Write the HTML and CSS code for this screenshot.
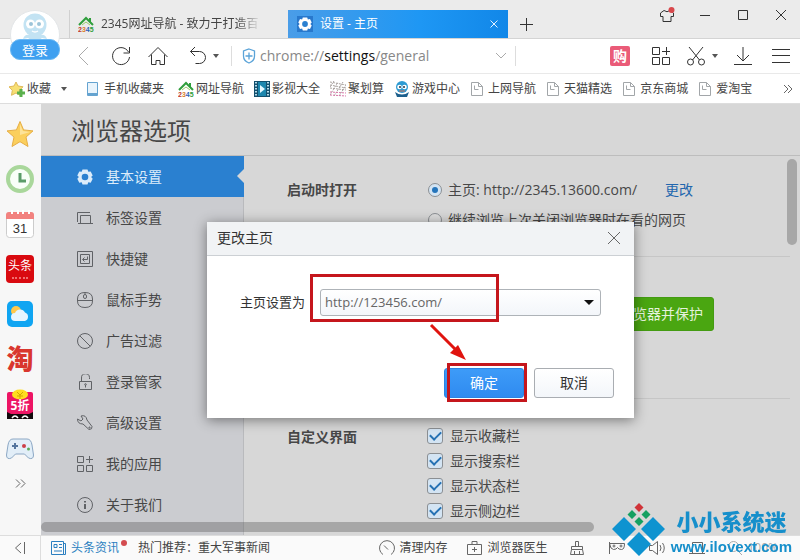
FILE: index.html
```html
<!DOCTYPE html>
<html lang="zh-CN">
<head>
<meta charset="utf-8">
<title>设置 - 主页</title>
<link rel="stylesheet" href="styles.css">
</head>
<body>
<svg class="defs" aria-hidden="true">
  <symbol id="i-page" viewBox="0 0 16 16"><path d="M1.5 1.5h7l4 4v9h-11zM8.500 1.500v4h4M4.500 4.500v4h4" fill="none" stroke="#a2a6a9"/></symbol>
  <symbol id="i-gear" viewBox="0 0 16 16"><path d="M5.500 0.500h5l.8 2.300 2.400-.4 2 4-1.600 1.600 1.600 1.700-2 4-2.400-.5-.8 2.300h-5l-.8-2.300-2.400.5-2-4L1.900 8 .3 6.400l2-4 2.400.4z"/><circle cx="8" cy="8" r="3.300" class="gear-hole"/></symbol>
</svg>

<header class="chrome">
  <div class="tabs">
    <div class="tab">
      <svg class="i16" viewBox="0 0 16 16"><path d="M1 9L8 2l7 7M12 2v4" fill="none" stroke="#2f9e3c" stroke-width="2"/><path d="M4 9l4-3 4 3" fill="none" stroke="#9acb6a"/><text class="mini" x="0" y="16"><tspan fill="#c0392b">2</tspan><tspan fill="#d9822b">3</tspan><tspan fill="#2c62b8">4</tspan><tspan fill="#2f9e3c">5</tspan></text></svg>
      <span class="tab-title fade">2345网址导航 - 致力于打造百</span>
    </div>
    <div class="tab active">
      <svg class="i16 tab-gear"><use href="#i-gear"/></svg>
      <span class="tab-title">设置 - 主页</span>
      <button class="plain" aria-label="关闭标签"><svg width="8" height="8" viewBox="0 0 8 8"><path d="M.5.5l7 7M7.500.500l-7 7" stroke="#e4f2ff" fill="none"/></svg></button>
    </div>
    <button class="plain new-tab" aria-label="新标签"><svg class="line" width="13" height="13"><path d="M6.500 0v13M0 6.500h13"/></svg></button>
    <div class="window-tools">
      <button class="plain" aria-label="皮肤"><svg class="line" width="16" height="16" viewBox="0 0 16 16"><path d="M5 3.500L1.500 6v3.500H4v5h8v-5h2.500V6L11 3.500Q8 6 5 3.500z"/><circle cx="12.500" cy="3" r="3" fill="#d9484c" stroke="none"/></svg></button>
      <button class="plain" aria-label="最小化"><svg class="line" width="12" height="12"><path d="M1 6.500h10"/></svg></button>
      <button class="plain" aria-label="最大化"><svg class="line" width="12" height="12"><path d="M1.500 1.500h9v9h-9z"/></svg></button>
      <button class="plain" aria-label="关闭"><svg class="line" width="12" height="12"><path d="M1 1l10 10M11 1L1 11"/></svg></button>
    </div>
  </div>

  <div class="toolbar">
    <button class="plain nav" aria-label="后退"><svg class="line pale" width="20" height="20"><path d="M14 1L5 10l9 9"/></svg></button>
    <button class="plain nav" aria-label="刷新"><svg class="line" width="20" height="20"><path d="M17.500 6A8.500 8.500 0 1 0 18.500 11M18.500 1v6h-6"/></svg></button>
    <button class="plain nav" aria-label="主页"><svg class="line" width="20" height="20"><path d="M.5 11L10 1.500l9.500 9.500M3.500 8.500v10h4.500v-4h4v4h4.500v-10"/></svg></button>
    <button class="plain undo" aria-label="恢复"><svg class="line" width="18" height="20"><path d="M6 1L1.500 5.500 6 10M1.500 5.500h9a6 6 0 0 1 0 12h-4"/></svg><i class="caret"></i></button>
    <div class="address">
      <svg width="14" height="16" viewBox="0 0 14 16"><path d="M7 1l5.500 2v5q0 5-5.500 7Q1.500 13 1.500 8V3zM7 4.500v7M3.500 8h7" fill="none" stroke="#5aa3d8" stroke-width="1.300"/></svg>
      <span class="url">chrome://<b>settings</b>/general</span>
      <button class="plain" aria-label="展开地址"><svg class="line pale" width="12" height="8"><path d="M1 1l5 5 5-5"/></svg></button>
    </div>
    <div class="tools">
      <button class="plain buy"><span>购</span></button>
      <button class="plain" aria-label="应用"><svg class="line" width="20" height="20"><path d="M1.500 1.500h7v7h-7zM1.500 11.500h7v7h-7zM11.500 11.500h7v7h-7zM15.500 1v8M11 5.500h8"/></svg></button>
      <button class="plain snip" aria-label="截图"><svg class="line" width="20" height="20"><path d="M3 1l10.500 13M17 1L6.500 14"/><circle cx="4.500" cy="16" r="3"/><circle cx="15.500" cy="16" r="3"/></svg><i class="caret"></i></button>
      <button class="plain" aria-label="下载"><svg class="line" width="18" height="20"><path d="M9 1v14M3 9l6 6 6-6M0 18.500h18"/></svg></button>
      <button class="plain" aria-label="菜单"><svg class="line" width="18" height="16"><path d="M0 1.500h18M0 7.500h18M0 14.500h18"/></svg></button>
    </div>
  </div>

  <nav class="bookmarks">
    <a class="favorites" href="#"><svg class="i16" viewBox="0 0 16 16"><path d="M7 1l2 4 5 .8-3.500 3.500.7 5L7 12l-4.500 2.300.8-5L0 5.800 5 5z" fill="#f7df73" stroke="#dfb95a"/><path d="M12 8v8M8 12h8" stroke="#5bb04c" stroke-width="3"/></svg>收藏<i class="caret"></i></a>
    <a class="phone" href="#"><svg class="i16" viewBox="0 0 16 16"><path d="M1.500 1.500h10v13h-10z" fill="#e9f4fc" stroke="#64a3d0"/><path d="M1 13h11" stroke="#64a3d0" stroke-width="2"/></svg>手机收藏夹</a>
    <a href="#"><svg class="i16" viewBox="0 0 16 16"><path d="M1 9L8 2l7 7M12 2v4" fill="none" stroke="#2f9e3c" stroke-width="2"/><path d="M4 9l4-3 4 3" fill="none" stroke="#9acb6a"/><text class="mini" x="0" y="16"><tspan fill="#c0392b">2</tspan><tspan fill="#d9822b">3</tspan><tspan fill="#2c62b8">4</tspan><tspan fill="#2f9e3c">5</tspan></text></svg>网址导航</a>
    <a href="#"><svg class="i16" viewBox="0 0 16 16"><path d="M0 0h16v16H0z" fill="#124e6c"/><path d="M4 1h8v14H4z" fill="#1c86ad"/><path d="M6 4l5 4-5 4z" fill="#e5f8ff"/><path d="M2 1v14M14 1v14" stroke="#b6dcea" stroke-width="2" stroke-dasharray="1.500 1.500"/></svg>影视大全</a>
    <a href="#"><svg class="i16" viewBox="0 0 16 16"><g fill="none" stroke-dasharray="2 1"><path d="M0 1l16 3M0 4l16 3M0 7l16 2" stroke="#a9a39d"/><path d="M0 6l4-6M0 14l8-13M4 15l9-14M9 15l7-11" stroke="#a8a0a2"/><path d="M0 11l16 1M0 14l16 1" stroke="#d976a8"/></g></svg>聚划算</a>
    <a href="#"><svg class="i16" viewBox="0 0 16 16"><circle cx="8" cy="6" r="6" fill="#2d9bd3"/><path d="M1 11q7 5 14 0l-2 5H3z" fill="#1d5f8c"/><circle cx="5.500" cy="6" r="2.300" fill="#fff"/><circle cx="10.500" cy="6" r="2.300" fill="#fff"/><circle cx="6" cy="6" r="1" fill="#234"/><circle cx="10" cy="6" r="1" fill="#234"/><path d="M5 10h6" stroke="#cf6a4f"/></svg>游戏中心</a>
    <a href="#"><svg class="i16"><use href="#i-page"/></svg>上网导航</a>
    <a href="#"><svg class="i16"><use href="#i-page"/></svg>天猫精选</a>
    <a href="#"><svg class="i16"><use href="#i-page"/></svg>京东商城</a>
    <a href="#"><svg class="i16"><use href="#i-page"/></svg>爱淘宝</a>
    <button class="plain more" aria-label="更多书签"><svg class="line grey" width="10" height="10"><path d="M1 1l4 4-4 4M5 1l4 4-4 4"/></svg></button>
  </nav>

  <div class="account">
    <svg width="50" height="50" viewBox="0 0 50 50"><circle cx="25" cy="25" r="24.500" fill="#fff" stroke="#e3e6e8"/><circle cx="25" cy="15" r="11.500" fill="#c3e3f3"/><path d="M13 29q2-5 6-4h12q4-1 6 4l-5-1-3 2h-8l-3-2z" fill="#c3e3f3"/><circle cx="20.500" cy="14" r="4.500" fill="#fff"/><circle cx="29.500" cy="14" r="4.500" fill="#fff"/><circle cx="21" cy="14" r="2" fill="#9cc4d9"/><circle cx="29" cy="14" r="2" fill="#9cc4d9"/><path d="M22 21q3 2 6 0" stroke="#fff" stroke-width="1.500" fill="none"/></svg>
    <button class="login">登录</button>
  </div>
</header>

<div class="workspace">
  <aside class="sidebar">
    <button class="plain" aria-label="收藏"><svg width="28" height="28" viewBox="0 0 28 28"><path d="M14 1.500l3.600 8.400 9.400 1-7 6.200 2 9.400-8-4.800-8 4.800 2-9.400-7-6.200 9.400-1z" fill="#fbcf5d" stroke="#e6ae45"/><path d="M14 4l3 7 7 1-10 3z" fill="#fde39a"/></svg></button>
    <button class="plain" aria-label="历史"><svg width="28" height="28" viewBox="0 0 28 28"><circle cx="14" cy="14" r="12" fill="#f9fff8" stroke="#a9d79b" stroke-width="4"/><path d="M14 8v8h6" fill="none" stroke="#5b9c68" stroke-width="3"/></svg></button>
    <button class="plain" aria-label="日历"><svg width="28" height="28" viewBox="0 0 28 28"><rect x=".5" y="2.500" width="27" height="25" rx="3" fill="#fff" stroke="#ccc"/><path d="M0 9V5q0-3 3-3h22q3 0 3 3v4z" fill="#f2827f"/><path d="M6 0v4M12 0v4M17 0v4M23 0v4" stroke="#fff" stroke-width="2"/><text x="14" y="23" text-anchor="middle" font-size="13" fill="#333" font-family="Liberation Sans, sans-serif">31</text></svg></button>
    <button class="plain" aria-label="头条"><span class="toutiao">头条<i></i></span></button>
    <button class="plain" aria-label="天气"><svg width="28" height="28" viewBox="0 0 28 28"><rect x="1" y="1" width="26" height="26" rx="5" fill="#10a5f2"/><circle cx="10" cy="11" r="5" fill="#ffc84a"/><path d="M9 21a4 4 0 0 1 0-8 5.500 5.500 0 0 1 10-.5 4.500 4.500 0 0 1 0 8.500z" fill="#e6f5ff"/></svg></button>
    <button class="plain tao">淘</button>
    <button class="plain" aria-label="5折"><span class="sale"><svg width="26" height="30" viewBox="0 0 26 30"><rect y="3" width="26" height="27" rx="2" fill="#ed1464"/><path d="M0 30v-7l4 2h18l4-2v7z" fill="#130a0d"/><path d="M5 29q3-4 6 0M15 29q3-4 6 0" stroke="#fff" stroke-width="1.500" fill="none"/><ellipse cx="13" cy="5.500" rx="8" ry="5" fill="#ffdd1f"/><path d="M10 3l3 3 3-3M13 6v4M10 7h6" stroke="#d3a700" fill="none"/></svg><span>5折</span></span></button>
    <button class="plain" aria-label="游戏"><svg width="28" height="24" viewBox="0 0 28 24"><path d="M7 2h14q4 0 5 6l1.500 10q0 5-5 3l-4-4h-9l-4 4q-5 2-5-3L2 8q1-6 5-6z" fill="#e2eef8" stroke="#8ca7c4"/><path d="M9 6v6M6 9h6" stroke="#54759e" stroke-width="2"/><circle cx="18" cy="9" r="2" fill="#cc4048"/><circle cx="22.500" cy="12" r="1.500" fill="#5cab5b"/></svg></button>
    <button class="plain side-more" aria-label="更多"><svg class="line grey" width="11" height="9"><path d="M1 .5l4 4-4 4M6 .5l4 4-4 4"/></svg></button>
  </aside>

  <div class="content">
    <h1>浏览器选项</h1>
    <div class="columns">
      <nav class="menu">
        <a class="current" href="#"><svg class="i16"><use href="#i-gear"/></svg>基本设置</a>
        <a href="#"><svg class="i16"><path d="M.5 12V2.500H13M3.500 5.500h10v8h-10zM1 13.500h15"/></svg>标签设置</a>
        <a href="#"><svg class="i16"><path d="M.5.5h15v15H.5zM3.500 3.500h9v9h-9zM10.500 5.500v3H6M7.500 6.500l-2 2 2 2"/></svg>快捷键</a>
        <a href="#"><svg class="i16"><path d="M.5 7q0-6.500 7.500-6.500T15.500 7v2q0 6.500-7.500 6.500T.5 9zM1 8.500h14M8 .5v2"/><rect x="6.500" y="2.500" width="3" height="4" rx="1.500"/></svg>鼠标手势</a>
        <a href="#"><svg class="i16"><circle cx="8" cy="8" r="7.500"/><path d="M2.700 2.700l10.600 10.600"/></svg>广告过滤</a>
        <a href="#"><svg class="i16"><path d="M2.500 7.500h12v8h-12zM4.500 7V4a4 4 0 0 1 8-.5V5M8.500 11v2.500"/><circle cx="8.500" cy="10.500" r=".8"/></svg>登录管家</a>
        <a href="#"><svg class="i16"><path d="M4 1q5-1.500 6 4l5 6.500q.5 3-3 3L6 9Q.5 9 .5 4L4 6l2-2z"/><circle cx="12.500" cy="12.500" r=".6"/></svg>高级设置</a>
        <a href="#"><svg class="i16"><path d="M.5.5h6v6h-6zM.5 9.500h6v6h-6zM9.500 9.500h6v6h-6zM12.500 0v7M9 3.500h7"/></svg>我的应用</a>
        <a href="#"><svg class="i16"><circle cx="8" cy="8" r="7.500"/><path d="M8 7v5M8 4v1.500" stroke-width="2"/></svg>关于我们</a>
      </nav>
      <main class="settings">
        <section>
          <h2>启动时打开</h2>
          <div class="options startup">
            <div class="option"><input type="radio" name="start" id="s1" checked><label for="s1">主页: http://2345.13600.com/</label><a href="#">更改</a></div>
            <div class="option"><input type="radio" name="start" id="s2"><label for="s2">继续浏览上次关闭浏览器时在看的网页</label></div>
          </div>
        </section>
        <section class="default-browser"><button class="protect">浏览器并保护</button></section>
        <section class="interface">
          <h2>自定义界面</h2>
          <div class="options">
            <div class="option"><input type="checkbox" id="c1" checked><label for="c1">显示收藏栏</label></div>
            <div class="option"><input type="checkbox" id="c2" checked><label for="c2">显示搜索栏</label></div>
            <div class="option"><input type="checkbox" id="c3" checked><label for="c3">显示状态栏</label></div>
            <div class="option"><input type="checkbox" id="c4" checked><label for="c4">显示侧边栏</label></div>
          </div>
        </section>
        <i class="thumb-v"></i>
      </main>
    </div>
    <i class="thumb-h"></i>

    <div class="overlay">
      <form class="dialog" role="dialog" aria-labelledby="dlg-title">
        <div class="dialog-head"><span id="dlg-title">更改主页</span><button type="button" class="plain" aria-label="关闭"><svg class="line grey" width="14" height="14"><path d="M1 1l12 12M13 1L1 13"/></svg></button></div>
        <div class="field">
          <label for="home">主页设置为</label>
          <div class="combo"><input id="home" type="text" value="http://123456.com/"><button type="button" aria-label="展开"><i></i></button></div>
        </div>
        <div class="actions"><button type="button" class="ok">确定</button><button type="button" class="cancel">取消</button></div>
        <i class="mark mark-field"></i>
        <i class="mark mark-ok"></i>
        <svg class="arrow" width="40" height="40" viewBox="0 0 40 40"><path d="M2 2l26 26" stroke="#e0140f" stroke-width="3"/><path d="M37 37l-16-7 8-8z" fill="#e0140f"/></svg>
      </form>
    </div>
  </div>
</div>

<footer class="status">
  <button class="plain collapse" aria-label="收起侧栏"><svg class="line grey" width="12" height="12"><path d="M7 1L1.500 6 7 11M10.500 0v12"/></svg></button>
  <a class="news" href="#"><svg width="16" height="14" viewBox="0 0 16 14"><path d="M.5.500h12v13H.5zM12.500 2.500h2v11h-2M3 3.500h3v3H3zM8 3.500h3M8 6.500h3M3 10h8" fill="none" stroke="#2b7fc0"/></svg>头条资讯<i></i></a>
  <a class="hot" href="#">热门推荐：重大军事新闻</a>
  <div class="status-tools">
    <button class="plain"><svg class="line grey" width="16" height="16"><path d="M4 14.500a7.500 7.500 0 1 1 8 0M5 5.500l4 4"/></svg>清理内存</button>
    <button class="plain"><svg class="line grey" width="16" height="16"><path d="M.5 4.500h14v10H.5zM5 4V1.500h5V4M7.500 7v5M5 9.500h5"/></svg>浏览器医生</button>
    <button class="plain tiny" aria-label="清扫"><svg class="line grey" width="16" height="16"><path d="M6.500 1.500h3v5h-3zM2.500 6.500h11v3h-11zM2.500 9.500l-1 5h13l-1-5M5.500 14v-3M10.500 14v-3"/></svg></button>
    <button class="plain tiny" aria-label="无痕"><svg class="line grey" width="16" height="16"><path d="M.5 2v12M.5 3.500h15q0 6-3 6-3 0-4-2-1 2-4 2-3 0-4-6"/><circle cx="5" cy="6" r="1"/><circle cx="12" cy="6" r="1"/></svg></button>
    <button class="plain tiny" aria-label="声音"><svg class="line grey" width="16" height="16"><path d="M.5 5.500h3l5-4v13l-5-4h-3zM11 5q2 3 0 6M13.500 3q3.500 5 0 10"/></svg></button>
    <button class="plain tiny" aria-label="窗口"><svg class="line grey" width="16" height="16"><path d="M3.500 13V2.500h10V13M0 13.500h16"/></svg></button>
    <button class="plain zoom"><svg class="line" width="16" height="16"><circle cx="6.500" cy="6.500" r="5"/><path d="M10 10l5 5"/></svg>100%</button>
  </div>
</footer>

<div class="brand">
  <svg width="54" height="56" viewBox="0 0 54 56"><path d="M12 15l12 12-12 12L0 27zM41 15l12 12-12 12-12-12zM27 30l12 12-12 12-12-12z" fill="#0e93d0"/><path d="M20 8l4.500 4.500L20 17l-4.500-4.500zM34 8l4.500 4.500L34 17l-4.500-4.500zM27 15l4.500 4.500L27 24l-4.500-4.500z" fill="#15a061"/><path d="M27 1l4.500 4.500L27 10l-4.500-4.500z" fill="#d03338"/></svg>
  <div><strong>小小系统迷</strong><span>www.ilovext.com</span></div>
</div>
</body>
</html>
```
FILE: styles.css
```css
* { box-sizing: border-box; }
body {
  margin: 0;
  height: 100vh;
  display: flex;
  flex-direction: column;
  overflow: hidden;
  font: 12px/16px "Open Sans", "Noto Sans CJK SC", sans-serif;
  color: #444;
  background: #fff;
}
a { color: inherit; text-decoration: none; }
svg { flex: none; }
.defs { position: absolute; width: 0; height: 0; }
.i16 { width: 16px; height: 16px; }
.mini { font: 700 7px "Liberation Sans", sans-serif; }
.line { fill: none; stroke: #333; }
.line.pale { stroke: #aaa; }
.line.grey { stroke: #666; }
button { font: inherit; color: inherit; cursor: pointer; }
.plain {
  display: flex;
  align-items: center;
  justify-content: center;
  padding: 0;
  border: 0;
  background: none;
  white-space: nowrap;
}
.caret {
  border: 3px solid transparent;
  border-top: 4px solid #555;
  border-bottom: 0;
}

/* Window frame */
.chrome { position: relative; flex: none; }
.tabs {
  display: flex;
  align-items: flex-end;
  height: 39px;
  padding-left: 69px;
  background: #ebebeb;
  border-bottom: 1px solid #d4d4d4;
}
.tab {
  display: flex;
  align-items: center;
  gap: 7px;
  width: 219px;
  height: 28px;
  padding: 0 10px 0 8px;
  border-left: 1px solid #d0d0d0;
}
.tab.active {
  width: 220px;
  padding-left: 9px;
  border: 0;
  color: #fff;
  background: linear-gradient(90deg, #4a9de8, #1e97f4 60%, #1187e8);
}
.tab-gear { padding: 1px; background: #2878cc; fill: #fff; }
.gear-hole { fill: #2a80d0; }
.tab-title { flex: 1; white-space: nowrap; overflow: hidden; }
.fade { flex: none; width: 160px; -webkit-mask-image: linear-gradient(90deg, #000 85%, transparent); mask-image: linear-gradient(90deg, #000 85%, transparent); }
.new-tab { width: 36px; height: 28px; }
.window-tools { display: flex; align-self: flex-start; margin-left: auto; }
.window-tools .plain { width: 38px; height: 29px; }

.toolbar {
  display: flex;
  align-items: center;
  height: 35px;
  padding-left: 65px;
  border-bottom: 1px solid #e9e9e9;
}
.nav { width: 37px; height: 34px; }
.undo { width: 55px; height: 34px; gap: 6px; }
.address {
  flex: 1;
  display: flex;
  align-items: center;
  gap: 4px;
  height: 20px;
  padding: 0 8px 0 10px;
  border: 1px solid #ddd;
  border-width: 0 1px;
}
.url { flex: 1; font-size: 14px; line-height: 20px; color: #888; }
.url b { font-weight: 400; color: #111; }
.tools { display: flex; margin-left: 82px; }
.tools .plain { width: 38px; height: 34px; }
.tools .buy { width: 44px; }
.buy span {
  width: 20px;
  height: 20px;
  border-radius: 2px;
  background: #ea5b78;
  color: #fff;
  font-size: 14px;
  font-weight: 700;
  line-height: 19px;
}
.tools .snip { width: 44px; gap: 6px; }

.bookmarks {
  display: flex;
  align-items: center;
  gap: 10px;
  height: 30px;
  padding: 0 7px 0 9px;
  border-bottom: 1px solid #ddd;
  white-space: nowrap;
}
.bookmarks a { display: flex; align-items: center; gap: 2px; }
.favorites { margin-right: 9px; }
.favorites .caret { margin-left: 8px; }
.phone { margin-right: 4px; }
.more { margin-left: auto; }

.account {
  position: absolute;
  left: 10px;
  top: 10px;
  width: 50px;
}
.account svg { display: block; }
.login {
  position: absolute;
  left: 0;
  bottom: 0;
  width: 50px;
  height: 21px;
  padding: 0;
  border: 1px solid #6db9f3;
  border-radius: 10px;
  background: #3fa0f0;
  color: #fff;
  font-size: 13px;
  line-height: 18px;
}

/* Side dock */
.workspace { flex: 1; display: flex; min-height: 0; }
.sidebar {
  flex: none;
  width: 41px;
  padding-top: 7px;
  background: #f7f7f7;
}
.sidebar .plain { width: 40px; height: 45px; }
.toutiao {
  display: block;
  width: 28px;
  height: 28px;
  border-radius: 4px;
  background: #d90a10;
  color: #fff;
  font-size: 12px;
  line-height: 22px;
}
.toutiao i {
  display: block;
  width: 16px;
  margin: 0 auto;
  border-top: 2px dotted #f07070;
}
.sidebar .tao { color: #d9372e; font-size: 27px; font-weight: 900; }
.sale { position: relative; height: 30px; }
.sale > span { position: absolute; inset: 9px 0 auto; color: #fff; font-weight: 700; }
.sidebar .side-more { height: 25px; }

/* Options page */
.content {
  position: relative;
  flex: 1;
  display: flex;
  flex-direction: column;
  min-width: 0;
  overflow: hidden;
  background: #d7d7d7;
  font-size: 14px;
  color: #474747;
}
h1 {
  flex: none;
  margin: 0;
  height: 52px;
  padding-left: 30px;
  border-bottom: 1px solid #bdbdbd;
  font-size: 24px;
  font-weight: 400;
  line-height: 54px;
}
.columns { flex: 1; display: flex; min-height: 0; }
.menu {
  flex: none;
  width: 203px;
  background: #cbccd0;
  border-right: 1px solid #b9babd;
}
.menu a {
  display: flex;
  align-items: center;
  gap: 13px;
  height: 41px;
  padding-left: 36px;
}
.menu svg { fill: none; stroke: #606266; }
.menu .current { position: relative; margin-right: -1px; background: #2a80d0; color: #dcecfa; }
.menu .current svg { fill: #dcecfa; stroke: none; }
.menu .current::after {
  content: "";
  position: absolute;
  right: 0;
  top: 13px;
  border: 7px solid transparent;
  border-right-color: #d7d7d7;
  border-left: 0;
}
.settings { position: relative; flex: 1; padding: 0 10px 0 43px; }
section { display: flex; align-items: flex-start; border-bottom: 1px solid #c6c6c6; }
section h2 { flex: none; width: 140px; margin: 0; font-size: 14px; line-height: 20px; }
section:first-child { height: 101px; padding-top: 24px; }
.option { display: flex; align-items: center; gap: 7px; height: 25px; white-space: nowrap; line-height: 20px; }
.startup .option { height: 30px; gap: 6px; }
.startup { margin-top: -5px; }
.option a { margin-left: 22px; color: #2166ae; }
.option input {
  appearance: none;
  flex: none;
  display: grid;
  place-items: center;
  width: 16px;
  height: 16px;
  margin: 0;
  border: 1px solid #8b8f93;
  border-radius: 3px;
  background: #dcdcdc;
}
.option input:checked { background: #d3e4f3; }
.option input[type="radio"] { width: 14px; height: 14px; margin: 0 0 0 1px; border-radius: 50%; }
.option input[type="radio"]:checked::before {
  content: "";
  width: 6px;
  height: 6px;
  border-radius: 50%;
  background: #2575bb;
}
.option input[type="checkbox"]:checked::before {
  content: "";
  width: 9px;
  height: 5px;
  margin-bottom: 3px;
  border: solid #2571b3;
  border-width: 0 0 2px 2px;
  transform: rotate(-45deg);
}
.default-browser { height: 142px; padding: 40px 0 0 321px; }
.protect {
  height: 34px;
  padding: 0 10px;
  border: 1px solid #449b12;
  border-radius: 3px;
  background: #4aa611;
  color: #e4f2dc;
}
.interface { padding-top: 28px; border: 0; }
.interface .options { margin-top: -4px; }
.thumb-v, .thumb-h { position: absolute; border-radius: 5px; background: rgba(90, 90, 90, 0.38); }
.thumb-v { right: 3px; top: 3px; width: 10px; height: 86px; }
.thumb-h { left: 0; bottom: 3px; width: 553px; max-width: 100%; height: 10px; }

/* Dialog */
.overlay { position: absolute; inset: 0; display: flex; align-items: center; justify-content: center; }
.dialog {
  position: relative;
  width: 427px;
  max-width: 100%;
  padding-bottom: 20px;
  background: #fff;
  box-shadow: 0 2px 12px rgba(0, 0, 0, 0.45);
  color: #333;
}
.dialog-head {
  display: flex;
  align-items: center;
  justify-content: space-between;
  height: 34px;
  padding: 0 13px 0 10px;
  background: #f1f3f5;
  border-bottom: 1px solid #ccd0d4;
}
.field { display: flex; align-items: center; gap: 15px; padding: 33px 33px 0; font-size: 13px; }
.combo {
  flex: 1;
  display: flex;
  height: 27px;
  border: 1px solid #aeb3b8;
  border-radius: 3px;
  background: linear-gradient(#fff, #f3f6fa);
}
.combo input {
  flex: 1;
  min-width: 0;
  padding: 0 4px;
  border: 0;
  background: none;
  color: #666;
  font: inherit;
}
.combo button {
  display: grid;
  place-items: center;
  width: 22px;
  padding: 0;
  border: 0;
  background: none;
}
.combo i { border: 5px solid transparent; border-top-color: #111; border-bottom: 0; }
.actions { display: flex; justify-content: flex-end; gap: 10px; margin-top: 52px; padding-right: 20px; }
.actions button { width: 80px; height: 30px; padding: 0; border: 1px solid #a9adb2; border-radius: 3px; background: linear-gradient(#fff, #f3f6fa); }
.actions .ok { border-color: #2b84e2; background: linear-gradient(#3d9bf8, #2f8bf0); color: #fff; }
.mark { position: absolute; border: 3px solid #c5161c; }
.mark-field { left: 103px; top: 52px; width: 189px; height: 48px; }
.mark-ok { right: 107px; bottom: 16px; width: 80px; height: 39px; }
.arrow { position: absolute; left: 222px; top: 101px; }

/* Status bar */
.status {
  flex: none;
  display: flex;
  align-items: center;
  height: 25px;
  padding-right: 22px;
  border-top: 1px solid #ddd;
  background: #fafafa;
  white-space: nowrap;
}
.collapse { width: 41px; height: 24px; border-right: 1px solid #ddd; }
.news { display: flex; align-items: center; gap: 4px; margin: 0 11px 0 10px; color: #2b7fc0; }
.news i { align-self: flex-start; width: 6px; height: 6px; margin-left: -2px; border-radius: 50%; background: #d34c50; }
.status-tools { display: flex; gap: 20px; margin-left: auto; }
.status-tools .plain { gap: 4px; }
.status-tools .tiny { width: 20px; }
.status-tools .zoom { color: #aaa; }
.zoom svg { stroke: #aaa; }

.brand {
  position: fixed;
  right: 8px;
  bottom: 2px;
  display: flex;
  align-items: flex-end;
  gap: 5px;
  color: #168fcb;
}
.brand div { display: flex; flex-direction: column; align-items: center; }
.brand strong { font-size: 22px; font-weight: 900; line-height: 30px; }
.brand span { font: 700 15px/22px "Liberation Sans", sans-serif; }
```
